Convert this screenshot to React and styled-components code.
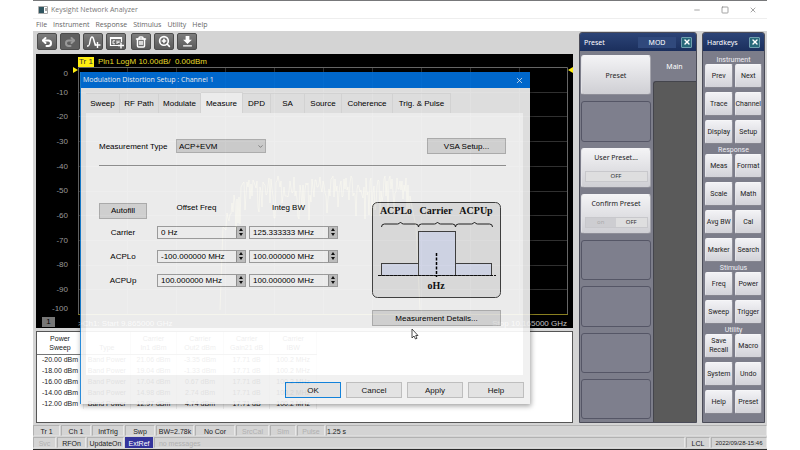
import React from 'react';
import styled, { createGlobalStyle, css } from 'styled-components';
import { Undo2, Redo2, ZoomIn, Minus, Square, X, ChevronDown, Trash2 } from 'lucide-react';
import { MdFileDownload } from 'react-icons/md';

const sans = '"Liberation Sans", Arial, sans-serif';
const ui = '"Open Sans", "Segoe UI", sans-serif';
const panel = '"Noto Sans", Tahoma, sans-serif';
const keys = 'Roboto, Tahoma, sans-serif';

const GlobalStyle = createGlobalStyle`
    * { box-sizing: border-box; }
    body { margin: 0; background: #fff; font-family: ${sans}; font-size: 8px; }
    button, input, select { font: inherit; color: inherit; margin: 0; padding: 0; border-radius: 0; }
    h1, h2, h3 { margin: 0; font: inherit; }
`;

const AppWindow = styled.div`
    position: relative;
    display: flex;
    flex-direction: column;
    min-height: 100vh;
    margin: 0 33px;
    background: #d4d4d4;
    border-top: 1px solid #77787a;
    border-bottom: 1px solid #2c2c2c;
`;

const TitleBar = styled.header`
    display: flex;
    align-items: center;
    height: 17px;
    padding: 0 10px 0 5px;
    gap: 3px;
    background: #fff;
    color: #777;
    font: 7px/10px ${ui};
`;

const WindowTitle = styled.h1`
    flex: 1;
`;

const WindowButtons = styled.div`
    display: flex;
    gap: 20px;
`;

const WindowButton = styled.button`
    display: flex;
    border: 0;
    background: none;
    color: #777;
`;

const MenuBar = styled.nav`
    display: flex;
    align-items: center;
    gap: 6px;
    height: 13px;
    padding: 0 3px;
    background: #fff;
    border-top: 1px solid #eee;
    font: 7px/10px ${ui};
`;

const MenuLink = styled.a`
    color: #666;
    text-decoration: none;
`;

const Workspace = styled.main`
    flex: 1;
    display: grid;
    grid-template-columns: minmax(0, 1fr) 118px 63px;
    column-gap: 5px;
    padding: 1px 2px 2px 3px;
`;

const Measurement = styled.section`
    display: flex;
    flex-direction: column;
`;

const Toolbar = styled.div`
    display: flex;
    gap: 5px;
    height: 22px;
    padding: 1px;
`;

const ToolGroup = styled.div`
    display: flex;
    gap: 3px;
`;

const ToolButton = styled.button`
    display: flex;
    align-items: center;
    justify-content: center;
    width: 20px;
    height: 17px;
    border: 1px solid #4c4c4c;
    border-radius: 2px;
    background: ${p => p.disabled ? '#606060' : 'linear-gradient(#7d7d7d, #5a5a5a)'};
    color: ${p => p.disabled ? '#999' : '#fff'};
`;

const Plot = styled.div`
    display: grid;
    grid-template-columns: 37px minmax(0, 1fr);
    grid-template-rows: 13px 248px 13px;
    height: 274px;
    margin-right: 1px;
    background: #000;
    color: #c4c4c4;
`;

const TraceHeader = styled.div`
    grid-column: 2;
    display: flex;
    align-items: center;
    gap: 4px;
    padding: 3px 0 0 5px;
    color: #e6dc28;
    line-height: 10px;
`;

const TraceTag = styled.span`
    padding: 0 1px;
    background: #ffee10;
    color: #333;
`;

const YAxis = styled.div`
    display: grid;
    grid-template-rows: 13px repeat(9, 1fr) 13px;
    align-items: center;
    padding-right: 5px;
    text-align: right;
    line-height: 9px;
    color: #9a9a9a;
`;

const GraphArea = styled.div`
    display: grid;
    grid-template-columns: 5px minmax(0, 1fr) 5px;
`;

const Graph = styled.svg`
    display: block;
    width: 100%;
    height: 248px;
`;

const ChannelTag = styled.span`
    justify-self: start;
    width: 13px;
    height: 10px;
    margin: 2px 0 0 6px;
    background: #777;
    color: #000;
    text-align: center;
    line-height: 10px;
`;

const XAxis = styled.div`
    display: flex;
    justify-content: space-between;
    padding: 0 6px 0 5px;
    line-height: 18px;
`;

const TableFrame = styled.div`
    flex: 1;
    margin: 3px 1px 0 0;
    background: #fff;
    border: 1px solid #555;
`;

const SweepTable = styled.table`
    width: 280px;
    table-layout: fixed;
    border-collapse: collapse;
    font-size: 7px;
    line-height: 9px;
    color: #222;
    text-align: center;

    th {
        height: 22px;
        padding: 0;
        font-weight: normal;
        border-right: 1px solid #ccc;
        border-bottom: 1px solid #777;
    }
    td {
        height: 11px;
        padding: 0;
        white-space: nowrap;
        border-right: 1px solid #eee;
    }
`;

const SidePanel = styled.aside`
    display: flex;
    flex-direction: column;
    border: 1px solid #4b4c58;
    border-radius: 3px 3px 0 0;
    background: #7c7d8a;
    overflow: hidden;
    font-family: ${panel};
`;

const PanelTitle = styled.h2`
    display: flex;
    align-items: center;
    justify-content: space-between;
    height: 18px;
    padding: 0 4px;
    background: linear-gradient(#2c4477, #1b2f5d);
    color: #fff;
    font-size: 7px;
`;

const PanelMode = styled.span`
    width: 38px;
    margin-left: auto;
    margin-right: 5px;
    background: #30497c;
    text-align: center;
    line-height: 11px;
`;

const CloseButton = styled.button`
    display: flex;
    align-items: center;
    justify-content: center;
    width: 11px;
    height: 11px;
    border: 1px solid #6f9fae;
    border-radius: 1px;
    background: #28697a;
    color: #fff;
`;

const PresetBody = styled.div`
    flex: 1;
    display: grid;
    grid-template-columns: 73px 1fr;
`;

const SoftkeyColumn = styled.div`
    display: grid;
    grid-template-rows: repeat(8, 1fr);
    gap: 6px;
    padding: 4px 2px 3px 1px;
`;

const Softkey = styled.button`
    display: flex;
    flex-direction: column;
    align-items: center;
    justify-content: center;
    gap: 9px;
    border: 1px solid #555666;
    border-radius: 3px;
    background: #7e7f8d;
    font-size: 7px;
    line-height: 9px;
    color: #222;
    ${p => !p.disabled && css`
        background: linear-gradient(#f3f3f5, #cfcfd4);
        border-color: #f4f4f6 #a5a5ad #8e8e98 #e2e2e6;
    `}
`;

const Toggle = styled.span`
    display: flex;
    justify-content: space-around;
    width: 63px;
    border: 1px solid #c8c8cc;
    background: #d8d8dc;
    font-size: 6px;
    line-height: 9px;
`;

const ToggleSide = styled.span`
    flex: 1;
    background: ${p => p.$faded ? '#cdcdd1' : '#dededf'};
    color: ${p => p.$faded ? '#aaa' : '#333'};
`;

const PresetTabs = styled.div`
    display: flex;
    flex-direction: column;
`;

const PresetTab = styled.button`
    height: 30px;
    border: 0;
    background: none;
    color: #fff;
    font-size: 7px;
`;

const TabFiller = styled.div`
    flex: 1;
    border: 1px solid #44454c;
    border-width: 1px 0 0 1px;
    border-radius: 3px 0 0 0;
    background: #5a5a5a;
`;

const KeyGroups = styled.div`
    padding-top: 3px;
    font-family: ${keys};
`;

const KeyGroup = styled.section`
    padding: 0 2px;
`;

const KeyGroupTitle = styled.h3`
    height: 10px;
    color: #f0f0f5;
    font-size: 7px;
    line-height: 12px;
    text-align: center;
`;

const KeyGrid = styled.div`
    display: grid;
    grid-template-columns: 1fr 1fr;
    gap: 4px 2px;
`;

const Hardkey = styled.button`
    height: 24px;
    border: 1px solid;
    border-color: #f6f6f8 #92929c #85858f #e6e6ea;
    border-radius: 2px;
    background: linear-gradient(#f2f2f5, #d2d2d8);
    color: #222;
    font-size: 7px;
    line-height: 9px;
`;

const StatusBar = styled.footer`
    display: flex;
    gap: 1px;
    height: 12px;
    padding-bottom: 1px;
    font-size: 7px;
    color: #222;
`;

const StatusCell = styled.span`
    flex: ${p => p.$width ? `0 0 ${p.$width}px` : '1'};
    border: 1px solid;
    border-color: #b2b2b2 #e8e8e8 #ddd #b2b2b2;
    line-height: 11px;
    text-align: ${p => p.$width ? 'center' : 'left'};
    white-space: nowrap;
    font-size: ${p => p.$small ? 6 : 7}px;
    color: ${p => p.$dim ? '#b0b0b0' : 'inherit'};
    ${p => p.$active && css`
        background: #34349c;
        border-color: #34349c;
        color: #fff;
    `}
`;

/* the setup dialog floats over the analyzer and is slightly see-through */
const Dialog = styled.section`
    position: absolute;
    top: 71px;
    left: 47px;
    width: 450px;
    background: #f0f0f0;
    border-left: 1px solid #1883d7;
    opacity: 0.92;
    box-shadow: 1px 2px 5px rgba(0, 0, 0, 0.4);
    color: #000;
`;

const DialogTitle = styled.h2`
    display: flex;
    align-items: center;
    justify-content: space-between;
    height: 16px;
    padding: 0 6px 0 2px;
    background: #0070dd;
    color: #fff;
    font: 7px/10px ${ui};
`;

const DialogClose = styled.button`
    display: flex;
    border: 0;
    background: none;
`;

const Tabs = styled.div`
    display: flex;
    height: 25px;
    padding: 5px 5px 0;
`;

const Tab = styled.button`
    width: ${p => p.$width}px;
    border: 1px solid #e4e4e4;
    border-width: 1px 1px 0 0;
    background: ${p => p.$selected ? '#fff' : '#f0f0f0'};
    margin-top: ${p => p.$selected ? -1 : 0}px;
`;

const TabPanel = styled.div`
    height: 262px;
    margin: 0 7px 0 5px;
    padding: 25px 17px 0 13px;
    background: #fff;
`;

const TypeRow = styled.div`
    display: flex;
    align-items: center;
    padding-bottom: 11px;
    border-bottom: 1px solid #999;
`;

const TypeLabel = styled.label`
    width: 77px;
`;

const SelectBox = styled.div`
    display: grid;
    align-items: center;
    width: 90px;
    height: 14px;

    > * { grid-area: 1 / 1; }
    svg { justify-self: end; margin-right: 2px; pointer-events: none; }
`;

const Select = styled.select`
    width: 100%;
    height: 14px;
    padding-left: 2px;
    appearance: none;
    border: 1px solid #bbb;
    background: #dcdcdc;
`;

const PushButton = styled.button`
    width: ${p => p.$width}px;
    height: 16px;
    border: 1px solid ${p => p.$focused ? '#0078d7' : '#b9b9b9'};
    background: #e1e1e1;
    ${p => p.$end && css`margin-left: auto;`}
`;

const Settings = styled.div`
    display: flex;
    justify-content: space-between;
    padding: 35px 5px 0 0;
`;

const OffsetGrid = styled.div`
    display: grid;
    grid-template-columns: 55px 89px 89px;
    grid-template-rows: 19px repeat(3, 24px);
    column-gap: 3px;
    align-items: center;
`;

const ColumnHead = styled.span`
    align-self: start;
    padding-right: 10px;
    text-align: center;
    line-height: 14px;
`;

const RowLabel = styled.span`
    width: 48px;
    text-align: center;
`;

const Spin = styled.div`
    display: flex;
    height: 13px;
    border: 1px solid #a8a8a8;
`;

const SpinInput = styled.input`
    flex: 1;
    min-width: 0;
    padding-left: 3px;
    border: 0;
    background: #fff;
`;

const SpinButtons = styled.div`
    display: grid;
    grid-template-rows: 1fr 1fr;
    width: 9px;
    background: #ccc;
    border-left: 1px solid #999;
`;

const SpinButton = styled.button`
    display: flex;
    align-items: center;
    justify-content: center;
    min-height: 0;
    border: 0;
    background: none;
`;

const DiagramColumn = styled.div`
    display: flex;
    flex-direction: column;
    gap: 12px;
    width: 129px;
    padding-top: 1px;

    svg { display: block; }
`;

const DialogFooter = styled.div`
    display: flex;
    justify-content: flex-end;
    gap: 5px;
    padding: 7px 6px 6px;
`;

const Cursor = styled.svg`
    position: absolute;
    top: 327px;
    left: 378px;
`;

const MENUS = ['File', 'Instrument', 'Response', 'Stimulus', 'Utility', 'Help'];

const TABS = [
    ['Sweep', 34], ['RF Path', 39], ['Modulate', 42], ['Measure', 42], ['DPD', 28],
    ['SA', 34], ['Source', 37], ['Coherence', 51], ['Trig. & Pulse', 58],
];

const ROWS = [
    ['Carrier', '0 Hz', '125.333333 MHz'],
    ['ACPLo', '-100.000000 MHz', '100.000000 MHz'],
    ['ACPUp', '100.000000 MHz', '100.000000 MHz'],
];

const SWEEP = [
    ['-20.00 dBm', 'Band Power', '21.06 dBm', '-3.35 dBm', '17.71 dB', '100.2 MHz'],
    ['-18.00 dBm', 'Band Power', '19.04 dBm', '-1.33 dBm', '17.71 dB', '100.2 MHz'],
    ['-16.00 dBm', 'Band Power', '17.04 dBm', '0.67 dBm', '17.71 dB', '100.2 MHz'],
    ['-14.00 dBm', 'Band Power', '14.98 dBm', '2.74 dBm', '17.71 dB', '100.2 MHz'],
    ['-12.00 dBm', 'Band Power', '12.97 dBm', '4.74 dBm', '17.71 dB', '100.2 MHz'],
];

const HARDKEYS = [
    ['Instrument', ['Prev', 'Next', 'Trace', 'Channel', 'Display', 'Setup']],
    ['Response', ['Meas', 'Format', 'Scale', 'Math', 'Avg BW', 'Cal', 'Marker', 'Search']],
    ['Stimulus', ['Freq', 'Power', 'Sweep', 'Trigger']],
    ['Utility', ['Save Recall', 'Macro', 'System', 'Undo', 'Help', 'Preset']],
];

const STATUS = [
    ['Tr 1', 27], ['Ch 1', 30], ['IntTrig', 32], ['Swp', 30], ['BW=2.78k', 38], ['No Cor', 40],
    ['SrcCal', 33, true], ['Sim', 26, true], ['Pulse', 28, true],
];

// noisy band between the two skirts of the modulated signal
function tracePath() {
    let seed = 7;
    const random = () => {
        seed = (seed * 16807) % 2147483647;
        return seed / 2147483647;
    };
    let d = 'M142 243L145 160';
    for (let x = 148; x < 334; x++) {
        const edge = x < 165 ? (165 - x) * 2 : 0;
        const dip = random() > 0.85 ? 22 : 0;
        d += `L${x} ${Math.round(109 + edge + random() * 22 + dip)}`;
    }
    return d + 'L338 160L342 243';
}

function TraceIcon() {
    return (
        <svg width="15" height="14" viewBox="0 0 15 14" fill="none" stroke="currentColor" strokeWidth="1.4">
            <path d="M1 11h1C4.5 11 3.5 2 6 2s1.5 7 4 8" />
            <path d="M11.5 7v6M8.5 10h6" />
        </svg>
    );
}

function ChannelIcon() {
    return (
        <svg width="15" height="14" viewBox="0 0 15 14" fill="none" stroke="currentColor" strokeWidth="1.2">
            <path d="M9 10.5H1.5v-8h11V7M1.5 3.5h11" />
            <path d="M6 5.8H4v3h2M8 5.5V9M8 7.2h2M10 5.5V8" strokeWidth="0.9" />
            <path d="M12 7.5v6M9 10.5h6" strokeWidth="1.4" />
        </svg>
    );
}

function SpinArrow({ down }) {
    return (
        <svg width="4" height="3" viewBox="0 0 4 3">
            <path d={down ? 'M0 0h4L2 3z' : 'M0 3h4L2 0z'} fill="#111" />
        </svg>
    );
}

function SpinBox({ label, value }) {
    return (
        <Spin>
            <SpinInput aria-label={label} defaultValue={value} />
            <SpinButtons>
                <SpinButton type="button" aria-label="Increase"><SpinArrow /></SpinButton>
                <SpinButton type="button" aria-label="Decrease"><SpinArrow down /></SpinButton>
            </SpinButtons>
        </Spin>
    );
}

function BandDiagram() {
    const brace = x => `M${x} 25q0-3 3-3h13q2 0 3-2q1 2 3 2h12q3 0 3 3`;
    return (
        <svg width="129" height="96" viewBox="0 0 129 96">
            <rect x="0.5" y="0.5" width="128" height="95" rx="5" fill="#ebebeb" stroke="#444" />
            <g fontFamily="'Liberation Serif', serif" fontWeight="bold" fontSize="10" fill="#111" textAnchor="middle">
                <text x="24" y="12">ACPLo</text>
                <text x="64" y="12">Carrier</text>
                <text x="104" y="12">ACPUp</text>
                <text x="64" y="87">oHz</text>
            </g>
            <g fill="none" stroke="#222">
                <path d={brace(9.5)} />
                <path d={brace(46.5)} />
                <path d={brace(83.5)} />
            </g>
            <g fill="#dfe4f6" stroke="#444">
                <rect x="9.5" y="61.5" width="37" height="12" />
                <rect x="83.5" y="61.5" width="36" height="12" />
                <rect x="46.5" y="29.5" width="37" height="44" />
            </g>
            <path d="M6 73.5h118" stroke="#111" strokeDasharray="3 1" />
            <path d="M64.5 51v24" stroke="#000" strokeWidth="1.5" strokeDasharray="3 1.5" />
        </svg>
    );
}

function PlotView() {
    const lines = [1, 2, 3, 4, 5, 6, 7, 8, 9];
    return (
        <Plot>
            <TraceHeader>
                <TraceTag>Tr 1</TraceTag>
                <span>Pln1 LogM 10.00dB/&nbsp; 0.00dBm</span>
            </TraceHeader>
            <YAxis>
                {[0, 10, 20, 30, 40, 50, 60, 70, 80, 90, 100].map(v => <span key={v}>{v ? -v : 0}</span>)}
            </YAxis>
            <GraphArea>
                <svg width="5" height="6" viewBox="0 0 5 6"><path d="M0 0v6L5 3z" fill="#ffee10" /></svg>
                <Graph viewBox="0 0 490 248" preserveAspectRatio="none">
                    <g stroke="#303030">
                        {lines.map(i => <path key={`h${i}`} d={`M0 ${Math.round(i * 24.7) + 0.5}h490`} />)}
                        {lines.map(i => <path key={`v${i}`} d={`M${i * 49 + 0.5} 0v247`} />)}
                    </g>
                    <path d="M0.5 247V0.5h489V247" fill="none" stroke="#666" />
                    <path d="M0 247.5h490" stroke="#8a8020" />
                    <path d={tracePath()} fill="none" stroke="#ffee60" strokeOpacity="0.5" />
                </Graph>
                <svg width="5" height="6" viewBox="0 0 5 6"><path d="M5 0v6L0 3z" fill="#ffee10" /></svg>
            </GraphArea>
            <ChannelTag>1</ChannelTag>
            <XAxis>
                <span>&gt;Ch1: Start 9.865000 GHz</span>
                <span>Stop 10.165000 GHz</span>
            </XAxis>
        </Plot>
    );
}

function SweepResults() {
    return (
        <TableFrame>
            <SweepTable>
                <thead>
                    <tr>
                        <th>Power<br />Sweep</th>
                        <th><br />Type</th>
                        <th>Carrier<br />In1 dBm</th>
                        <th>Carrier<br />Out2 dBm</th>
                        <th>Carrier<br />Gain21 dB</th>
                        <th>Carrier<br />IBW</th>
                    </tr>
                </thead>
                <tbody>
                    {SWEEP.map(row => (
                        <tr key={row[0]}>{row.map((cell, i) => <td key={i}>{cell}</td>)}</tr>
                    ))}
                </tbody>
            </SweepTable>
        </TableFrame>
    );
}

function PresetPanel() {
    return (
        <SidePanel>
            <PanelTitle>
                Preset
                <PanelMode>MOD</PanelMode>
                <CloseButton type="button" aria-label="Close preset"><X size={8} strokeWidth={4} /></CloseButton>
            </PanelTitle>
            <PresetBody>
                <SoftkeyColumn>
                    <Softkey type="button">Preset</Softkey>
                    <Softkey type="button" disabled />
                    <Softkey type="button">User Preset...<Toggle><ToggleSide>OFF</ToggleSide></Toggle></Softkey>
                    <Softkey type="button">
                        Confirm Preset
                        <Toggle><ToggleSide $faded>on</ToggleSide><ToggleSide>OFF</ToggleSide></Toggle>
                    </Softkey>
                    {[5, 6, 7, 8].map(n => <Softkey key={n} type="button" disabled />)}
                </SoftkeyColumn>
                <PresetTabs>
                    <PresetTab type="button">Main</PresetTab>
                    <TabFiller />
                </PresetTabs>
            </PresetBody>
        </SidePanel>
    );
}

function HardkeyPanel() {
    return (
        <SidePanel>
            <PanelTitle>
                Hardkeys
                <CloseButton type="button" aria-label="Close hardkeys"><X size={8} strokeWidth={4} /></CloseButton>
            </PanelTitle>
            <KeyGroups>
                {HARDKEYS.map(([title, names]) => (
                    <KeyGroup key={title}>
                        <KeyGroupTitle>{title}</KeyGroupTitle>
                        <KeyGrid>
                            {names.map(name => <Hardkey key={name} type="button">{name}</Hardkey>)}
                        </KeyGrid>
                    </KeyGroup>
                ))}
            </KeyGroups>
        </SidePanel>
    );
}

function SetupDialog() {
    const [tab, setTab] = React.useState('Measure');

    return (
        <Dialog role="dialog" aria-labelledby="setup-title">
            <DialogTitle id="setup-title">
                Modulation Distortion Setup : Channel 1
                <DialogClose type="button" aria-label="Close"><X size={9} strokeWidth={2} /></DialogClose>
            </DialogTitle>
            <Tabs role="tablist">
                {TABS.map(([name, width]) => (
                    <Tab
                        key={name}
                        type="button"
                        role="tab"
                        aria-selected={tab === name}
                        $selected={tab === name}
                        $width={width}
                        onClick={() => setTab(name)}
                    >
                        {name}
                    </Tab>
                ))}
            </Tabs>
            <TabPanel>
                <TypeRow>
                    <TypeLabel htmlFor="type">Measurement Type</TypeLabel>
                    <SelectBox>
                        <Select id="type" defaultValue="ACP+EVM">
                            <option>ACP+EVM</option>
                            <option>ACP</option>
                            <option>EVM</option>
                        </Select>
                        <ChevronDown size={7} color="#555" />
                    </SelectBox>
                    <PushButton type="button" $width={79} $end>VSA Setup...</PushButton>
                </TypeRow>
                <Settings>
                    <OffsetGrid>
                        <PushButton type="button" $width={48}>Autofill</PushButton>
                        <ColumnHead>Offset Freq</ColumnHead>
                        <ColumnHead>Integ BW</ColumnHead>
                        {ROWS.map(([name, offset, bw]) => (
                            <React.Fragment key={name}>
                                <RowLabel>{name}</RowLabel>
                                <SpinBox label={`${name} offset frequency`} value={offset} />
                                <SpinBox label={`${name} integration bandwidth`} value={bw} />
                            </React.Fragment>
                        ))}
                    </OffsetGrid>
                    <DiagramColumn>
                        <BandDiagram />
                        <PushButton type="button" $width={129}>Measurement Details...</PushButton>
                    </DiagramColumn>
                </Settings>
            </TabPanel>
            <DialogFooter>
                <PushButton type="button" $width={56} $focused>OK</PushButton>
                <PushButton type="button" $width={56}>Cancel</PushButton>
                <PushButton type="button" $width={56}>Apply</PushButton>
                <PushButton type="button" $width={56}>Help</PushButton>
            </DialogFooter>
        </Dialog>
    );
}

export default function App() {
    return (
        <>
            <GlobalStyle />
            <AppWindow>
                <TitleBar>
                    <svg width="10" height="8" viewBox="0 0 10 8">
                        <path d="M0.5 0.5h9v7h-9z" fill="#fff" stroke="#aaa" />
                        <path d="M1 1h5v6H1z" fill="#2f5560" />
                        <path d="M8 2v3" stroke="#555" />
                    </svg>
                    <WindowTitle>Keysight Network Analyzer</WindowTitle>
                    <WindowButtons>
                        <WindowButton type="button" aria-label="Minimize"><Minus size={8} /></WindowButton>
                        <WindowButton type="button" aria-label="Maximize"><Square size={8} /></WindowButton>
                        <WindowButton type="button" aria-label="Close"><X size={8} /></WindowButton>
                    </WindowButtons>
                </TitleBar>
                <MenuBar>
                    {MENUS.map(name => <MenuLink key={name} href="#">{name}</MenuLink>)}
                </MenuBar>
                <Workspace>
                    <Measurement>
                        <Toolbar>
                            <ToolGroup>
                                <ToolButton type="button" aria-label="Undo"><Undo2 size={12} strokeWidth={4} /></ToolButton>
                                <ToolButton type="button" aria-label="Redo" disabled><Redo2 size={12} strokeWidth={4} /></ToolButton>
                                <ToolButton type="button" aria-label="Add trace"><TraceIcon /></ToolButton>
                                <ToolButton type="button" aria-label="Add channel"><ChannelIcon /></ToolButton>
                            </ToolGroup>
                            <ToolGroup>
                                <ToolButton type="button" aria-label="Delete"><Trash2 size={12} strokeWidth={3} /></ToolButton>
                                <ToolButton type="button" aria-label="Zoom"><ZoomIn size={13} strokeWidth={3} /></ToolButton>
                                <ToolButton type="button" aria-label="Save"><MdFileDownload size={15} /></ToolButton>
                            </ToolGroup>
                        </Toolbar>
                        <PlotView />
                        <SweepResults />
                    </Measurement>
                    <PresetPanel />
                    <HardkeyPanel />
                </Workspace>
                <StatusBar>
                    {STATUS.map(([text, width, dim]) => (
                        <StatusCell key={text} $width={width} $dim={dim}>{text}</StatusCell>
                    ))}
                    <StatusCell>1.25 s</StatusCell>
                </StatusBar>
                <StatusBar>
                    <StatusCell $width={23} $dim>Svc</StatusCell>
                    <StatusCell $width={29}>RFOn</StatusCell>
                    <StatusCell $width={37}>UpdateOn</StatusCell>
                    <StatusCell $width={28} $active>ExtRef</StatusCell>
                    <StatusCell $dim>&nbsp; no messages</StatusCell>
                    <StatusCell $width={24}>LCL</StatusCell>
                    <StatusCell $width={56} $small>2022/09/28-15:46</StatusCell>
                </StatusBar>
                <SetupDialog />
                <Cursor width="8" height="12" viewBox="0 0 8 12">
                    <path d="M1 1v9l2-2 1.5 3 1.5-.7-1.3-2.8H7z" fill="#fff" stroke="#222" strokeWidth="0.8" />
                </Cursor>
            </AppWindow>
        </>
    );
}
